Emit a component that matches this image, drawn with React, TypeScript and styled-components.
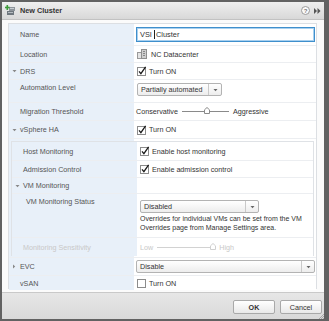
import React from "react";
import styled, { createGlobalStyle } from "styled-components";

const GlobalStyle = createGlobalStyle`
  html, body { margin: 0; padding: 0; background: #5f5f5f; }
  body { font-family: "Liberation Sans", Arial, sans-serif; }
`;

const LABEL_BG = "#e8f0f9";

const Frame = styled.div`
  width: 329px;
  height: 321px;
  box-sizing: border-box;
  border-style: solid;
  border-color: #626262;
  border-width: 2px 5px 2px 2px;
  display: flex;
  flex-direction: column;
  background: #fff;
  position: relative;
`;

const TitleBar = styled.div`
  height: 18px;
  flex: none;
  box-sizing: border-box;
  display: flex;
  align-items: center;
  gap: 4px;
  padding: 0 3px 0 3px;
  background: linear-gradient(#efefef, #d8d8d8);
  border-bottom: 1px solid #c2c2c2;
`;

const Title = styled.div`
  font-size: 7.3px;
  font-weight: bold;
  color: #333;
  flex: 1;
`;

const HelpIcon = styled.span`
  width: 7px;
  height: 7px;
  border-radius: 50%;
  border: 1px solid #9a9a9a;
  background: #fafafa;
  color: #777;
  font-size: 6px;
  font-weight: bold;
  display: flex;
  align-items: center;
  justify-content: center;
  line-height: 1;
`;

const Body = styled.div`
  height: 272px;
  flex: none;
  box-sizing: border-box;
  padding: 3px 7px 3px 6px;
  background: #fbfbfb;
`;

const Table = styled.div`
  height: 266px;
  box-sizing: border-box;
  border: 1px solid #dcdfe3;
  display: flex;
  flex-direction: column;
  background: #fff;
`;

const Row = styled.div<{ h: number; top?: boolean; first?: boolean }>`
  height: ${(p) => p.h}px;
  flex: none;
  box-sizing: border-box;
  display: grid;
  grid-template-columns: 125px 1fr;
  border-top: ${(p) => (p.first ? "none" : "1px solid #eceef1")};
  align-items: ${(p) => (p.top ? "start" : "center")};
  background: linear-gradient(to right, ${LABEL_BG} 125px, #fff 125px);
`;

const Label = styled.div<{ indent?: number; dim?: boolean; pt?: number }>`
  font-size: 7.2px;
  color: ${(p) => (p.dim ? "#c8c8c8" : "#555")};
  padding-left: ${(p) => p.indent ?? 11}px;
  padding-top: ${(p) => p.pt ?? 0}px;
  display: flex;
  align-items: center;
  white-space: nowrap;
`;

const Arrow = styled.span`
  width: 8px;
  margin-left: -8px;
  display: inline-flex;
  align-items: center;
`;

const Value = styled.div<{ pl?: number; pt?: number; col?: boolean }>`
  padding-left: ${(p) => p.pl ?? 2}px;
  padding-top: ${(p) => p.pt ?? 0}px;
  display: flex;
  flex-direction: ${(p) => (p.col ? "column" : "row")};
  align-items: ${(p) => (p.col ? "flex-start" : "center")};
  font-size: 7.2px;
  color: #333;
  white-space: nowrap;
`;

const NameInput = styled.div`
  width: 179px;
  height: 15px;
  box-sizing: border-box;
  border: 1px solid #3f8fcc;
  box-shadow: inset 0 0 0 1px #a8d0ef;
  background: #fff;
  display: flex;
  align-items: center;
  padding-left: 3px;
  font-size: 7.4px;
  color: #333;
  white-space: pre;
`;

const Caret = styled.span`
  width: 1px;
  height: 9px;
  background: #222;
  margin-right: 1px;
`;

const Check = styled.span`
  display: inline-flex;
  margin-right: 2px;
`;

const Select = styled.div<{ w: number }>`
  width: ${(p) => p.w}px;
  height: 13px;
  box-sizing: border-box;
  border: 1px solid #b3b3b3;
  border-radius: 2px;
  background: linear-gradient(#ffffff, #ededed);
  display: flex;
  align-items: center;
  font-size: 7.2px;
  color: #333;
`;

const SelectText = styled.span`
  flex: 1;
  padding-left: 3px;
`;

const SelectBtn = styled.span`
  width: 12px;
  height: 100%;
  border-left: 1px solid #c9c9c9;
  display: flex;
  align-items: center;
  justify-content: center;
`;

const SliderRow = styled.div<{ dim?: boolean }>`
  display: flex;
  align-items: center;
  gap: 4px;
  color: ${(p) => (p.dim ? "#c8c8c8" : "#333")};
  font-size: 7.2px;
`;

const Track = styled.div<{ w: number; dim?: boolean }>`
  width: ${(p) => p.w}px;
  height: 1px;
  background: ${(p) => (p.dim ? "#d2d2d2" : "#8a8a8a")};
  position: relative;
`;

const Thumb = styled.svg<{ at: number }>`
  position: absolute;
  left: ${(p) => p.at}px;
  top: -4px;
`;

const Desc = styled.div`
  font-size: 7px;
  line-height: 9px;
  color: #333;
  margin-top: 1px;
  white-space: normal;
`;

const NestedWrap = styled.div`
  height: 119px;
  flex: none;
  box-sizing: border-box;
  padding: 2px 2px 1px 2px;
  border-top: 1px solid #eceef1;
  background: linear-gradient(to right, ${LABEL_BG} 125px, #fff 125px);
`;

const Nested = styled.div`
  height: 115px;
  box-sizing: border-box;
  border: 1px solid #dfe2e6;
  display: flex;
  flex-direction: column;
  background: #fff;
`;

const Footer = styled.div`
  flex: 1;
  box-sizing: border-box;
  border-top: 1px solid #c9c9c9;
  background: linear-gradient(#e6e6e6, #d9d9d9);
  display: flex;
  align-items: flex-start;
  justify-content: flex-end;
  gap: 5px;
  padding: 7px 2px 0 0;
  position: relative;
`;

const Button = styled.button<{ primary?: boolean }>`
  width: 42px;
  height: 14px;
  box-sizing: border-box;
  border: 1px solid #a9a9a9;
  border-radius: 2px;
  background: linear-gradient(#ffffff, #e9e9e9);
  font-family: "Liberation Sans", Arial, sans-serif;
  font-size: 7.2px;
  font-weight: ${(p) => (p.primary ? "bold" : "normal")};
  color: #333;
  padding: 0;
  display: flex;
  align-items: center;
  justify-content: center;
`;

const Grip = styled.svg`
  position: absolute;
  right: 0;
  bottom: 0;
`;

const Down = ({ c = "#666" }: { c?: string }) => (
  <svg width="5" height="4" viewBox="0 0 5 4">
    <polygon points="0.5,1 4.5,1 2.5,3.2" fill={c} />
  </svg>
);

const Right = () => (
  <svg width="4" height="5" viewBox="0 0 4 5">
    <polygon points="1,0.5 3.2,2.5 1,4.5" fill="#888" />
  </svg>
);

const CheckBox = ({ on }: { on?: boolean }) => (
  <Check>
    <svg width="10" height="10" viewBox="0 0 10 10">
      <rect x="0.5" y="1.5" width="8" height="8" fill="#fff" stroke="#8c8c8c" />
      {on && (
        <path d="M2 5.3 L3.9 7.6 L8.6 0.8" fill="none" stroke="#1a1a1a" strokeWidth="1.3" />
      )}
    </svg>
  </Check>
);

const ThumbIcon = ({ at, dim }: { at: number; dim?: boolean }) => (
  <Thumb at={at} width="6" height="7" viewBox="0 0 6 7">
    <polygon
      points="3,0.5 5.5,2.8 5.5,6.5 0.5,6.5 0.5,2.8"
      fill="#fff"
      stroke={dim ? "#d0d0d0" : "#8a8a8a"}
    />
  </Thumb>
);

const ClusterIcon = () => (
  <svg width="11" height="11" viewBox="0 0 11 11">
    <rect x="4" y="2" width="6" height="4" fill="#8d949a" />
    <rect x="2" y="6" width="7" height="4" fill="#6f777e" />
    <rect x="5" y="3" width="4" height="1" fill="#c8cdd1" />
    <rect x="3" y="7" width="5" height="1" fill="#b5bbc0" />
    <rect x="1.5" y="0" width="1.6" height="5" fill="#3e9b3a" />
    <rect x="0" y="1.7" width="4.6" height="1.6" fill="#3e9b3a" />
  </svg>
);

const DatacenterIcon = () => (
  <svg width="10" height="10" viewBox="0 0 10 10" style={{ marginRight: 4 }}>
    <rect x="0.5" y="3.5" width="4" height="6" fill="#e4e4e4" stroke="#9a9a9a" />
    <rect x="4.5" y="0.5" width="5" height="9" fill="#cfcfcf" stroke="#8f8f8f" />
    <rect x="6" y="2" width="2" height="1" fill="#888" />
    <rect x="6" y="4" width="2" height="1" fill="#888" />
    <rect x="6" y="6" width="2" height="1" fill="#888" />
  </svg>
);

const Forward = () => (
  <svg width="7" height="6" viewBox="0 0 7 6">
    <polygon points="0,0 3,3 0,6" fill="#555" />
    <polygon points="3.5,0 6.5,3 3.5,6" fill="#555" />
  </svg>
);

export default function App() {
  return (
    <>
      <GlobalStyle />
      <Frame>
        <TitleBar>
          <ClusterIcon />
          <Title>New Cluster</Title>
          <HelpIcon>?</HelpIcon>
          <Forward />
        </TitleBar>
        <Body>
          <Table>
            <Row h={21} first>
              <Label>Name</Label>
              <Value>
                <NameInput>
                  VSI <Caret />Cluster
                </NameInput>
              </Value>
            </Row>
            <Row h={17}>
              <Label>Location</Label>
              <Value pl={3}>
                <DatacenterIcon />
                NC Datacenter
              </Value>
            </Row>
            <Row h={17}>
              <Label>
                <Arrow><Down c="#888" /></Arrow>DRS
              </Label>
              <Value pl={3}>
                <CheckBox on />
                Turn ON
              </Value>
            </Row>
            <Row h={23} top>
              <Label pt={3}>Automation Level</Label>
              <Value pl={3} pt={3}>
                <Select w={85}>
                  <SelectText>Partially automated</SelectText>
                  <SelectBtn><Down /></SelectBtn>
                </Select>
              </Value>
            </Row>
            <Row h={18}>
              <Label>Migration Threshold</Label>
              <Value pl={2}>
                <SliderRow>
                  Conservative
                  <Track w={47}>
                    <ThumbIcon at={22} />
                  </Track>
                  Aggressive
                </SliderRow>
              </Value>
            </Row>
            <Row h={18}>
              <Label>
                <Arrow><Down c="#888" /></Arrow>vSphere HA
              </Label>
              <Value pl={3}>
                <CheckBox on />
                Turn ON
              </Value>
            </Row>
            <NestedWrap>
              <Nested>
                <Row h={18} first>
                  <Label>Host Monitoring</Label>
                  <Value pl={3}>
                    <CheckBox on />
                    Enable host monitoring
                  </Value>
                </Row>
                <Row h={17}>
                  <Label>Admission Control</Label>
                  <Value pl={3}>
                    <CheckBox on />
                    Enable admission control
                  </Value>
                </Row>
                <Row h={16}>
                  <Label>
                    <Arrow><Down c="#888" /></Arrow>VM Monitoring
                  </Label>
                  <Value />
                </Row>
                <Row h={44} top>
                  <Label indent={14} pt={3}>VM Monitoring Status</Label>
                  <Value pl={3} pt={6} col>
                    <Select w={119}>
                      <SelectText>Disabled</SelectText>
                      <SelectBtn><Down /></SelectBtn>
                    </Select>
                    <Desc>
                      Overrides for individual VMs can be set from the VM
                      <br />
                      Overrides page from Manage Settings area.
                    </Desc>
                  </Value>
                </Row>
                <Row h={19}>
                  <Label dim>Monitoring Sensitivity</Label>
                  <Value pl={3}>
                    <SliderRow dim>
                      Low
                      <Track w={58} dim>
                        <ThumbIcon at={53} dim />
                      </Track>
                      High
                    </SliderRow>
                  </Value>
                </Row>
              </Nested>
            </NestedWrap>
            <Row h={18}>
              <Label>
                <Arrow><Right /></Arrow>EVC
              </Label>
              <Value pl={2}>
                <Select w={179}>
                  <SelectText>Disable</SelectText>
                  <SelectBtn><Down /></SelectBtn>
                </Select>
              </Value>
            </Row>
            <Row h={15}>
              <Label>vSAN</Label>
              <Value pl={3}>
                <CheckBox />
                Turn ON
              </Value>
            </Row>
          </Table>
        </Body>
        <Footer>
          <Button primary>OK</Button>
          <Button>Cancel</Button>
          <Grip width="6" height="6" viewBox="0 0 6 6">
            <path d="M6 1 L1 6 M6 3 L3 6 M6 5 L5 6" stroke="#999" strokeWidth="0.8" />
          </Grip>
        </Footer>
      </Frame>
    </>
  );
}
